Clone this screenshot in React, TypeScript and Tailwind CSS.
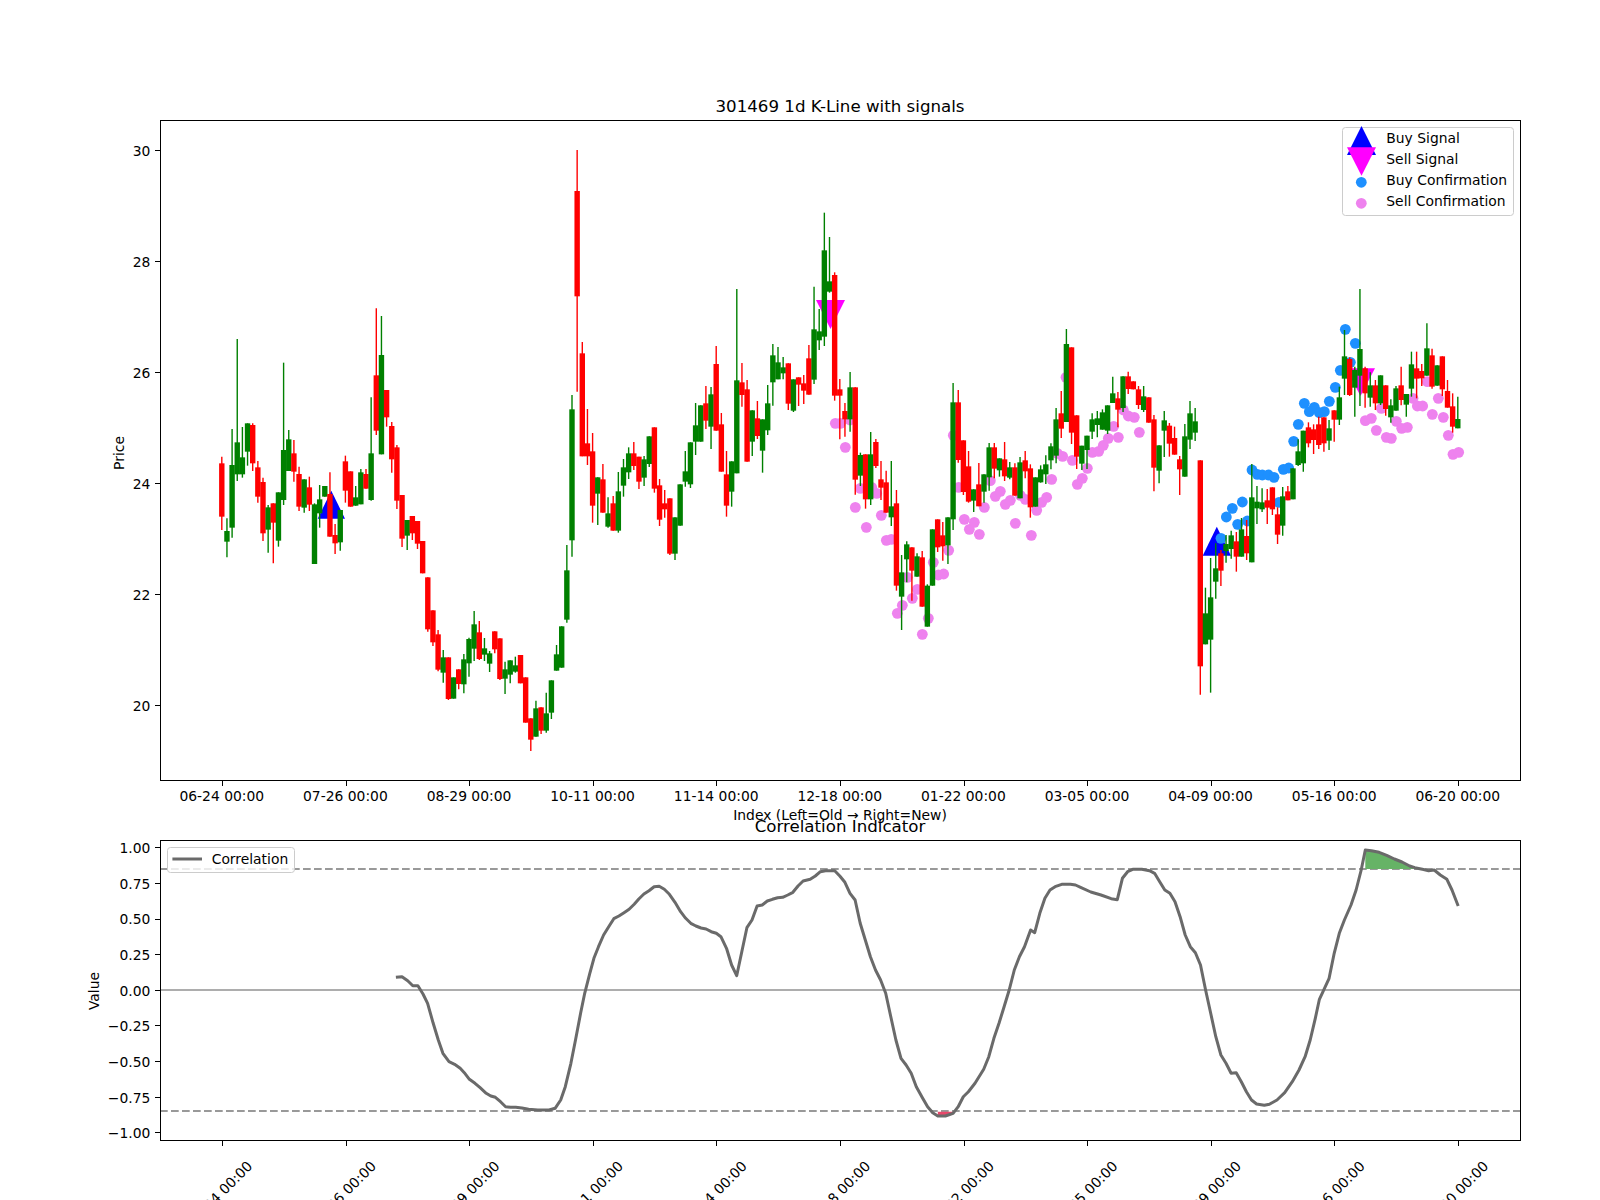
import React from "react";

type Row = [number, number, number, number, number]; // color(1 red,0 green), wickTop, bodyTop, bodyBot, wickBot

const x = (i: number) => 221.8 + 5.15 * i;
const snap = (v: number) => Math.floor(v) + 0.5;
const tickX = (i: number) => snap(x(i) + 0.6);
const conv = (oy: number, rows: Row[]) =>
  rows.map((r) => ({ red: r[0] === 1, wt: oy + r[1] / 3, bt: oy + r[2] / 3, bb: oy + r[3] / 3, wb: oy + r[4] / 3 }));

const candles = [
  ...conv(300, [
    [1,470,490,650,690],[0,655,693,725,772],[0,387,495,683,713],[0,117,427,523,543],[0,381,472,523,533],
    [0,370,370,455,497],[1,370,375,490,513],[1,483,502,590,608],[1,533,546,700,723],[0,615,622,689,758],
    [1,610,610,668,790],[0,577,577,722,740],[0,188,450,600,615],[0,390,418,513,513],[1,420,460,515,545],
    [1,500,522,620,633],[0,538,538,623,638],[1,530,562,614,633],[0,610,613,792,792],[0,555,598,640,683],
    [0,558,558,590,590],[1,517,582,710,710],[1,672,705,730,762],[0,630,630,727,752],[1,467,484,572,608],
    [1,514,514,620,620],[0,558,592,617,617],[0,507,517,613,613],[1,507,522,566,566],[0,292,460,600,602],
    [1,25,226,392,405],[0,48,165,463,463],[1,270,270,352,380],[1,366,378,478,518],[1,435,442,602,627],
    [1,585,585,716,741],[0,660,660,707,750],[1,648,648,700,720],[1,663,663,731,747],
  ]),
  ...conv(540, [
    [1,3,3,100,100],[1,112,112,268,275],[1,211,211,307,318],[1,270,283,389,394],
  ]),
  ...conv(480, [
    [0,510,532,578,608],[1,532,532,657,660],[0,592,592,656,656],[1,568,568,612,628],[0,522,538,613,640],
    [0,473,477,550,590],[0,393,433,506,543],[1,423,457,537,540],[0,474,505,524,543],[0,513,520,551,576],
    [1,454,454,508,520],[1,475,475,597,600],[0,545,568,596,642],[0,541,541,584,610],[0,530,556,575,578],
    [1,525,525,610,610],[1,592,592,728,728],[1,715,715,779,813],[0,662,685,770,770],[1,682,682,752,762],
    [0,638,700,752,758],[0,601,601,698,717],[0,495,523,572,572],[0,439,439,563,563],[0,195,271,419,428],
  ]),
  ...conv(140, [
    [0,765,808,1201,1250],[1,30,153,469,755],[1,606,640,949,949],[1,807,910,949,975],[1,879,934,1097,1148],
    [0,1012,1012,1061,1155],[1,972,1018,1118,1118],[0,1072,1120,1160,1163],[1,1068,1090,1172,1172],[0,996,1054,1172,1178],
    [0,957,982,1037,1070],[0,922,940,997,1017],[1,906,940,978,990],[1,950,950,1025,1047],[0,948,958,1013,1038],
    [0,889,889,972,981],[1,862,862,1046,1058],[1,1017,1036,1139,1158],[1,1050,1090,1108,1133],[1,1075,1075,1241,1245],
    [0,1132,1132,1241,1260],[0,1033,1033,1157,1157],[0,933,994,1025,1040],[0,907,907,1033,1044],[0,789,856,905,945],
    [0,796,796,905,905],[1,738,790,842,867],[0,741,763,860,927],[1,618,672,872,872],[1,819,853,995,995],
    [1,933,1003,1097,1130],[0,964,964,1055,1100],[0,447,721,1000,1000],[1,669,727,765,800],[1,720,748,965,965],
    [0,811,811,905,948],[1,783,835,888,897],[0,838,838,932,998],[0,735,790,871,885],[0,612,646,727,797],
    [0,621,667,718,718],[0,651,682,700,718],[1,670,670,791,810],[0,718,718,812,816],[1,712,712,734,798],
    [1,705,730,752,792],[1,615,655,764,764],[0,440,568,719,732],[0,507,574,601,630],[0,218,331,590,618],
    [0,291,424,455,458],[1,397,405,767,782],[1,717,748,767,898],[1,789,813,838,890],[0,696,742,838,875],
    [1,742,742,1019,1064],
  ]),
  ...conv(200, [
    [0,758,765,827,858],[1,763,763,898,926],[0,696,763,898,915],[1,717,726,798,804],[1,783,838,863,900],
    [1,812,847,938,938],[0,783,919,952,978],[1,870,910,1157,1172],[0,1065,1117,1190,1290],[0,1024,1033,1078,1147],
    [1,1042,1042,1112,1202],[0,1060,1069,1130,1130],[1,1053,1072,1220,1220],[0,1153,1157,1280,1280],[0,988,988,1157,1157],
    [1,958,958,1042,1056],[1,966,1006,1039,1082],[0,952,952,1036,1092],[0,549,607,958,990],[1,570,607,780,788],
    [1,721,721,876,885],[1,753,799,905,908],[0,868,868,902,936],[1,789,853,919,919],[0,823,823,875,908],
    [0,729,742,832,872],[1,729,742,806,835],[0,775,775,811,830],[1,726,778,829,843],[0,786,802,833,838],
    [1,790,802,887,887],[0,771,787,895,895],[1,753,781,814,835],[1,793,805,922,953],[0,832,832,920,920],
    [0,796,808,847,848],[0,766,793,823,852],[0,730,739,781,808],[0,624,658,767,790],
  ]),
  ...conv(320, [
    [1,213,280,326,354],[0,27,72,306,306],[1,82,82,338,372],[1,286,286,410,447],[0,377,377,431,450],
    [0,347,347,390,447],[0,280,298,335,357],[0,273,295,315,352],[0,268,277,329,329],[0,256,256,332,342],
    [0,170,220,249,249],[1,216,235,269,322],[0,169,169,264,276],[1,155,169,207,222],[1,184,184,208,208],
    [1,198,208,255,267],[0,198,229,270,276],[1,232,232,308,308],[1,285,298,443,514],[0,376,376,452,490],
    [0,273,301,332,411],[1,309,317,371,410],[1,320,354,404,404],[1,408,418,448,525],[0,312,349,470,470],
    [0,243,280,359,387],[0,264,304,338,363],
  ]),
  ...conv(380, [
    [1,241,241,859,944],[0,623,700,793,793],[0,534,652,779,938],[0,490,565,605,656],[1,510,520,572,618],
    [0,465,492,513,548],[0,452,466,507,536],[1,456,484,530,575],[0,414,448,530,530],[1,420,468,520,540],
    [0,252,352,547,547],[0,318,365,385,432],[0,325,367,388,396],[1,327,361,383,432],[1,322,322,388,405],
    [1,382,403,464,492],[0,321,349,437,467],[1,318,334,361,361],[0,265,265,358,358],[0,178,214,255,258],
  ]),
  ...conv(110, [
    [0,962,962,1060,1085],[1,937,952,1000,1012],[1,943,958,990,1032],[1,920,943,1005,1017],[1,922,922,1000,1025],
    [0,930,955,992,1020],[1,901,901,929,995],[0,830,862,929,945],[0,660,739,806,855],[1,742,747,855,858],
    [0,770,780,833,920],[0,537,717,797,888],[1,770,775,850,893],[0,787,826,863,890],[1,810,826,880,900],
    [0,796,796,880,885],[1,826,826,897,917],[0,868,886,922,938],[0,828,835,902,902],[1,770,826,870,886],
    [0,852,852,884,920],[0,725,763,836,860],[1,725,775,806,865],[1,762,783,805,828],[0,640,715,797,797],
    [1,716,736,830,836],[0,766,766,827,827],[1,739,739,838,858],[1,810,843,893,893],[1,850,889,950,968],
    [0,860,927,955,955],
  ]),
];

const pts = (ox: number, oy: number, list: number[][]) => list.map(([a, b]) => [ox + a / 3, oy + b / 3]);

const blueDots = [
  ...pts(1190, 380, [[93,475],[109,411],[127,385],[157,366],[143,433],[172,423],[186,270],[202,283],[217,285],[235,285],[252,292],[267,367],[280,268],[296,264],[311,184],[325,133],[343,70],[358,95],[373,82],[388,98],[403,95],[418,64],[436,22]]),
  ...pts(1300, 110, [[121,781],[136,658],[151,757],[166,700]]),
];

const purpleDots = [
  ...pts(800, 200, [[106,670],[121,670],[136,742],[150,660],[166,922],[181,865],[199,982],[215,862],[230,880],[244,946],[259,1021],[274,1018],[292,1240],[307,1216],[322,1132],[337,1195],[352,1168],[367,1303],[385,1255],[400,1087],[415,1125],[431,1122],[446,1051],[460,706],[476,862],[493,958],[508,988],[523,967],[538,1003],[553,922],[571,842],[586,889],[601,874],[616,913],[631,901],[646,970],[661,886],[676,898],[694,1006],[710,931],[725,907],[740,892],[755,838]]),
  ...pts(1000, 320, [[172,400],[188,409],[198,172],[217,421],[232,493],[247,475],[262,445],[277,397],[296,394],[310,376],[325,355],[341,319],[355,352],[370,270],[385,288],[403,292],[418,337]]),
  ...pts(1300, 110, [[196,932],[214,925],[229,961],[244,895],[259,982],[274,985],[289,934],[305,955],[322,952],[339,865],[352,888],[368,888],[382,815],[397,913],[415,865],[430,922],[445,976],[459,1033],[476,1027]]),
];

const ticks = ["06-24 00:00","07-26 00:00","08-29 00:00","10-11 00:00","11-14 00:00","12-18 00:00","01-22 00:00","03-05 00:00","04-09 00:00","05-16 00:00","06-20 00:00"];

const mainY = (p: number) => 150.3 + (30 - p) * 55.5;
const corrY = (v: number) => 990.3 - 142.5 * v;

const lineA = [[580,622],[592,620],[603,632],[613,647],[623,647],[633,672],[642,700],[653,760],[663,810],[672,850],[684,875],[695,883],[706,895],[714,908],[724,928],[735,940],[745,953],[757,970],[766,978],[775,982],[785,995],[795,1010],[805,1012],[815,1012],[827,1014],[840,1018],[858,1020],[880,1020],[892,1015],[903,990],[912,950],[923,880],[932,810],[942,730],[950,670],[960,610],[968,565],[977,530],[987,495],[997,470],[1007,446],[1017,438],[1027,428],[1037,418],[1047,403],[1056,387],[1066,372],[1076,362],[1086,350],[1096,349],[1106,358],[1116,373],[1127,397],[1138,425],[1148,445],[1158,460],[1168,468],[1178,474],[1188,477],[1198,485],[1208,490],[1217,500],[1228,535],[1238,585],[1248,617],[1258,545],[1268,473],[1278,450],[1288,408],[1298,405],[1308,393],[1318,388],[1328,383],[1338,382],[1348,375],[1358,367],[1368,348]];
const lineB = [[6,333],[20,328],[30,318],[40,305],[50,302],[68,302],[78,318],[88,337],[98,370],[108,390],[118,460],[128,510],[138,560],[148,600],[158,630],[168,670],[178,740],[188,810],[198,865],[208,885],[218,910],[228,950],[240,983],[250,1010],[260,1028],[270,1038],[285,1038],[300,1030],[310,1010],[320,980],[330,965],[343,940],[360,898],[370,860],[380,805],[390,760],[400,710],[410,660],[420,600],[430,560],[440,530],[452,480],[460,488],[470,430],[480,385],[490,360],[500,350],[513,343],[530,343],[540,345],[550,352],[570,366],[590,375],[610,386],[622,389],[632,325],[642,305],[652,298],[670,298],[685,302],[695,310],[705,335],[715,360],[725,370],[735,395],[745,440],[755,495],[765,530],[775,548],[785,585],[795,660],[805,730],[815,800],[825,855],[835,880],[845,910],[855,908],[865,935],[875,965],[885,990],[895,1002],[910,1006],[920,1003],[935,990],[950,968],[965,935],[978,900],[990,860],[1000,810],[1010,745],[1018,688],[1028,655],[1037,625],[1047,550],[1057,490],[1067,450],[1080,405],[1090,360],[1100,300],[1108,240],[1120,242],[1135,247],[1150,256],[1165,267],[1180,276],[1195,288],[1205,293],[1220,298],[1232,302],[1243,300],[1255,315],[1268,328],[1278,360],[1290,408]];

const toLine = (list: number[][], ox: number) => list.map(([a, b]) => [ox + a / 1.96, 770 + b / 3]);
const corrPath = [...toLine(lineA, 100), ...toLine(lineB, 800)].map((p) => p.map((n) => n.toFixed(1)).join(",")).join(" ");
const greenFill = [[1108,297],[1108,240],[1120,242],[1135,247],[1150,256],[1165,267],[1180,276],[1195,288],[1205,297]].map(([a, b]) => `${(800 + a / 1.96).toFixed(1)},${(770 + b / 3).toFixed(1)}`).join(" ");
const redFill = [[270,1025],[302,1025],[300,1030],[285,1038],[270,1038]].map(([a, b]) => `${(800 + a / 1.96).toFixed(1)},${(770 + b / 3).toFixed(1)}`).join(" ");

const labelCls = "text-[13.89px] fill-black";

function KLine() {
  return (
    <svg width={1600} height={800} viewBox="0 0 1600 800" className="block overflow-visible">
      <text x={840} y={111.5} textAnchor="middle" className="text-[16.67px] fill-black">301469 1d K-Line with signals</text>
      <polygon points="331.3,490.7 317.7,518.7 345,518.7" fill="#0000ff" />
      <polygon points="1216.8,526.7 1202.7,555.7 1231,555.7" fill="#0000ff" />
      <polygon points="816,300 845,300 830.5,329" fill="#ff00ff" />
      <polygon points="1346,368.3 1375,368.3 1360.5,396" fill="#ff00ff" />
      {purpleDots.map(([cx, cy], k) => <circle key={k} cx={cx} cy={cy} r={5.4} fill="#ee82ee" />)}
      {blueDots.map(([cx, cy], k) => <circle key={k} cx={cx} cy={cy} r={5.4} fill="#1e90ff" />)}
      {candles.map((c, i) => {
        const col = c.red ? "#ff0000" : "#008000";
        return (
          <g key={i}>
            <line x1={x(i)} x2={x(i)} y1={c.wt} y2={c.wb} stroke={col} strokeWidth={1.4} />
            <rect x={x(i) - 2.7} y={c.bt} width={5.4} height={Math.max(c.bb - c.bt, 1)} fill={col} />
          </g>
        );
      })}
      <rect x={160.5} y={120.5} width={1360} height={660} fill="none" stroke="#000" strokeWidth={1} />
      {[30, 28, 26, 24, 22, 20].map((p) => (
        <g key={p}>
          <line x1={155} x2={160} y1={snap(mainY(p))} y2={snap(mainY(p))} stroke="#000" strokeWidth={1} />
          <text x={150.3} y={mainY(p) + 5.2} textAnchor="end" className={labelCls}>{p}</text>
        </g>
      ))}
      {ticks.map((t, k) => (
        <g key={t}>
          <line x1={tickX(k * 24)} x2={tickX(k * 24)} y1={781} y2={786} stroke="#000" strokeWidth={1} />
          <text x={x(k * 24)} y={801} textAnchor="middle" className={labelCls}>{t}</text>
        </g>
      ))}
      <text x={840} y={820} textAnchor="middle" className={labelCls}>Index (Left=Old → Right=New)</text>
      <text transform="translate(123.5 453) rotate(-90)" textAnchor="middle" className={labelCls}>Price</text>

      <rect x={1342.5} y={127.5} width={171} height={88} rx={3} fill="#ffffff" fillOpacity={0.8} stroke="#cccccc" strokeWidth={1} />
      <polygon points="1361.5,126 1347,155 1376,155" fill="#0000ff" />
      <polygon points="1347,147.3 1376,147.3 1361.5,175.7" fill="#ff00ff" />
      <circle cx={1361.3} cy={182.3} r={5.4} fill="#1e90ff" />
      <circle cx={1361.3} cy={203.3} r={5.4} fill="#ee82ee" />
      <text x={1386.3} y={143} className={labelCls}>Buy Signal</text>
      <text x={1386.3} y={164} className={labelCls}>Sell Signal</text>
      <text x={1386.3} y={185} className={labelCls}>Buy Confirmation</text>
      <text x={1386.3} y={206} className={labelCls}>Sell Confirmation</text>
    </svg>
  );
}

function Correlation() {
  return (
    <svg width={1600} height={400} viewBox="0 800 1600 400" className="block overflow-visible">
      <text x={840} y={831.5} textAnchor="middle" className="text-[16.67px] fill-black">Correlation Indicator</text>
      <line x1={160} x2={1520} y1={990} y2={990} stroke="#adadad" strokeWidth={2} />
      <line x1={160} x2={1520} y1={869} y2={869} stroke="#999999" strokeWidth={2.2} strokeDasharray="7.7 3.3" />
      <line x1={160} x2={1520} y1={1111} y2={1111} stroke="#999999" strokeWidth={2.2} strokeDasharray="7.7 3.3" />
      <polygon points={greenFill} fill="#66b366" />
      <polygon points={redFill} fill="#e8476a" />
      <polyline points={corrPath} fill="none" stroke="#6a6a6a" strokeWidth={3} strokeLinejoin="round" />
      <rect x={160.5} y={840.5} width={1360} height={300} fill="none" stroke="#000" strokeWidth={1} />
      {[1, 0.75, 0.5, 0.25, 0, -0.25, -0.5, -0.75, -1].map((v) => (
        <g key={v}>
          <line x1={155} x2={160} y1={snap(corrY(v))} y2={snap(corrY(v))} stroke="#000" strokeWidth={1} />
          <text x={150.3} y={corrY(v) + 5.4} textAnchor="end" className={labelCls}>{(v < 0 ? "\u2212" : "") + Math.abs(v).toFixed(2)}</text>
        </g>
      ))}
      {ticks.map((t, k) => (
        <g key={t}>
          <line x1={tickX(k * 24)} x2={tickX(k * 24)} y1={1141} y2={1146} stroke="#000" strokeWidth={1} />
          <text transform={`rotate(-45 ${x(k * 24) - 2} 1193.5)`} x={x(k * 24) - 2} y={1198.5} textAnchor="middle" className={labelCls}>{t}</text>
        </g>
      ))}
      <text transform="translate(99 991) rotate(-90)" textAnchor="middle" className={labelCls}>Value</text>
      <rect x={167.5} y={847.5} width={127} height={25} rx={3} fill="#ffffff" fillOpacity={0.8} stroke="#cccccc" strokeWidth={1} />
      <line x1={172.4} x2={202} y1={859} y2={859} stroke="#6a6a6a" strokeWidth={3} />
      <text x={211.7} y={864} className={labelCls}>Correlation</text>
    </svg>
  );
}

export default function App() {
  return (
    <div className="w-[1600px] h-[1200px] bg-white overflow-hidden font-['DejaVu_Sans',sans-serif]">
      <KLine />
      <Correlation />
    </div>
  );
}
